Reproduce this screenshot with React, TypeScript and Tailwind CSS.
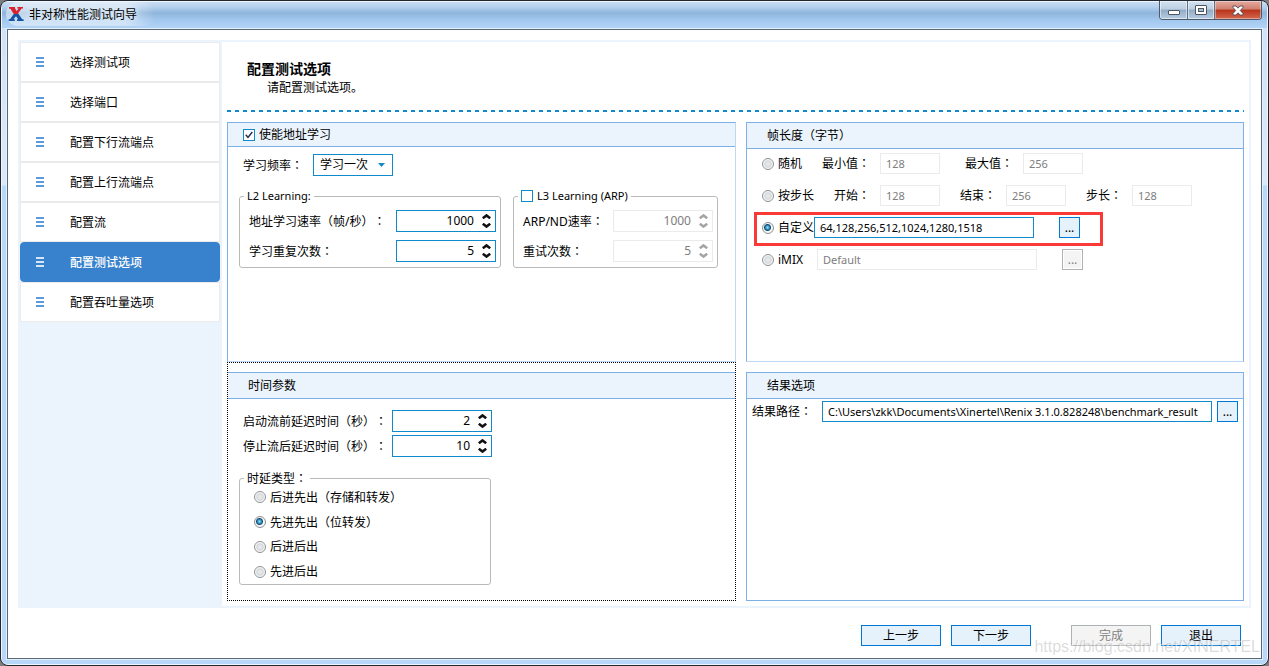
import React, { useState } from 'react';
import clsx from 'clsx';

const steps = [
  '选择测试项',
  '选择端口',
  '配置下行流端点',
  '配置上行流端点',
  '配置流',
  '配置测试选项',
  '配置吞吐量选项',
];

const latencyTypes = [
  { value: 'lifo-store', label: '后进先出（存储和转发）' },
  { value: 'fifo-bit', label: '先进先出（位转发）' },
  { value: 'lilo', label: '后进后出' },
  { value: 'filo', label: '先进后出' },
];

// Full-width punctuation is centred in its cell in the TC face
const Label: React.FC<{ text: string }> = ({ text }) => (
  <>
    {text.split(/([（）：])/).map((part, i) =>
      /^[（）：]$/.test(part) ? (
        <span key={i} className="font-['Noto_Sans_CJK_TC',sans-serif]">{part}</span>
      ) : (
        part
      )
    )}
  </>
);

const Logo: React.FC = () => (
  <svg className="w-4 h-[14px]" viewBox="0 0 16 14" aria-hidden="true">
    <path d="M1 0H7V1.6H6L8.3 4.8L10.6 1.6H9.4V0H15V1.6H13.6L9.6 7H6.4L2.4 1.6H1Z" fill="#d8232f" />
    <path d="M1 0H6.2L10.6 7H5.8L2.4 1.6H1Z" fill="#d8232f" />
    <path d="M5.8 7H10.6L14.2 12.3H15.6V14H9V12.3H10.2L8 9.3L5.5 12.3H6.8V14H0.6V12.3H2Z" fill="#1554a5" />
  </svg>
);

interface RadioProps {
  name: string;
  label: string;
  checked: boolean;
  onChange: () => void;
  className?: string;
}

const Radio: React.FC<RadioProps> = ({ name, label, checked, onChange, className }) => (
  <label className={clsx('flex items-center gap-1 h-4 whitespace-nowrap', className)}>
    <input
      type="radio"
      name={name}
      checked={checked}
      onChange={onChange}
      className="appearance-none shrink-0 w-3 h-3 rounded-full border border-[#8e9193] bg-[radial-gradient(circle,#e4e6e8_0_2px,#d3d6d9_3px,#ffffff_5px)] checked:bg-[radial-gradient(circle_at_45%_45%,#9fdcf5_0,#2b8dbd_2px,#164b70_3px,#f4f6f8_4px)]"
    />
    <span><Label text={label} /></span>
  </label>
);

interface CheckboxProps {
  label: string;
  checked: boolean;
  onChange: (checked: boolean) => void;
}

const Checkbox: React.FC<CheckboxProps> = ({ label, checked, onChange }) => (
  <label className="flex items-center gap-1">
    <span className="relative w-3 h-3">
      <input
        type="checkbox"
        checked={checked}
        onChange={(e) => onChange(e.target.checked)}
        className="block appearance-none w-3 h-3 border border-[#118acb] bg-white"
      />
      {checked && (
        <svg className="absolute inset-0 w-3 h-3 pointer-events-none" viewBox="0 0 12 12" fill="none">
          <path d="M2.8 5.8L5 8.4L9.3 3" stroke="#26304e" strokeWidth="1.5" />
        </svg>
      )}
    </span>
    <span>{label}</span>
  </label>
);

interface SpinnerProps {
  id: string;
  initial: number;
  disabled?: boolean;
}

const Spinner: React.FC<SpinnerProps> = ({ id, initial, disabled }) => {
  const [value, setValue] = useState(initial);
  return (
    <span
      className={clsx(
        'flex items-center w-[100px] h-[22px] border bg-white pr-1 shrink-0',
        disabled ? 'border-[#ebebeb] text-[#7d7d7d]' : 'border-[#118acb]'
      )}
    >
      <input
        id={id}
        value={value}
        disabled={disabled}
        onChange={(e) => setValue(Number(e.target.value) || 0)}
        className="flex-1 min-w-0 text-right pr-2 outline-none"
      />
      <span className={clsx('flex flex-col gap-1', disabled ? 'text-[#a5a5a5]' : 'text-[#111111]')}>
        <button type="button" aria-label="+" disabled={disabled} onClick={() => setValue(value + 1)}>
          <svg className="block w-[9px] h-[5px]" viewBox="0 0 9 5" fill="none" stroke="currentColor" strokeWidth="2.5">
            <path d="M0.8 4.3L4.5 1.4L8.2 4.3" />
          </svg>
        </button>
        <button type="button" aria-label="-" disabled={disabled} onClick={() => setValue(value - 1)}>
          <svg className="block w-[9px] h-[5px]" viewBox="0 0 9 5" fill="none" stroke="currentColor" strokeWidth="2.5">
            <path d="M0.8 0.7L4.5 3.6L8.2 0.7" />
          </svg>
        </button>
      </span>
    </span>
  );
};

interface FieldProps extends React.InputHTMLAttributes<HTMLInputElement> {
  className?: string;
}

const Field: React.FC<FieldProps> = ({ className, ...props }) => (
  <input
    {...props}
    className={clsx(
      'h-[21px] border px-[5px] text-[11px] outline-none bg-white',
      props.disabled ? 'border-[#ebebeb] text-[#7d7d7d]' : 'border-[#118acb]',
      className
    )}
  />
);

const MoreButton: React.FC<{ disabled?: boolean; className?: string }> = ({ disabled, className }) => (
  <button
    type="button"
    disabled={disabled}
    className={clsx(
      'w-[21px] h-[21px] border shrink-0 leading-4',
      disabled ? 'border-[#adb2b5] bg-[#f4f4f4] text-[#838383] shadow-[inset_0_0_0_1px_#ffffff]' : 'border-[#0078d7] bg-[#e5f1fb]',
      className
    )}
  >
    ...
  </button>
);

const FooterButton: React.FC<{ label: string; disabled?: boolean; className?: string }> = ({ label, disabled, className }) => (
  <button
    type="button"
    disabled={disabled}
    className={clsx(
      'w-20 h-[21px] border leading-4',
      disabled ? 'border-[#adb2b5] bg-[#f4f4f4] text-[#838383]' : 'border-[#0078d7] bg-[#e5f1fb]',
      className
    )}
  >
    {label}
  </button>
);

const TitleBar: React.FC = () => (
  <header className="flex justify-between items-start h-[26px] pl-1 pr-[5px] bg-[linear-gradient(to_bottom,#c9dcf3_0,#b4d0ee_5px,#8fb5dc_11px,#a3c8ee_18px,#b1d3f6_26px)]">
    <div className="flex items-center gap-[5px] h-6 px-0.5 rounded-full bg-[linear-gradient(to_right,#ffffff70_80%,transparent)]">
      <Logo />
      <h1 className="pt-0.5 pr-4 [text-shadow:0_0_6px_white]">非对称性能测试向导</h1>
    </div>
    <div className="flex h-[19px] -mt-px border border-t-0 border-[#4c5a6b] rounded-b-sm overflow-hidden">
      <button type="button" aria-label="最小化" className="flex items-center justify-center w-7 border-r border-[#5d6f84] bg-[linear-gradient(to_bottom,#d3e2f1_0,#bccfe2_45%,#92abc5_50%,#b6cde3_100%)] shadow-[inset_0_0_0_1px_#ffffff80]">
        <svg className="w-3 h-[11px]" viewBox="0 0 12 11">
          <rect x="0.5" y="5.5" width="11" height="4" rx="0.5" fill="#fff" stroke="#4c5560" />
        </svg>
      </button>
      <button type="button" aria-label="最大化" className="flex items-center justify-center w-[27px] border-r border-[#5d6f84] bg-[linear-gradient(to_bottom,#d3e2f1_0,#bccfe2_45%,#92abc5_50%,#b6cde3_100%)] shadow-[inset_0_0_0_1px_#ffffff80]">
        <svg className="w-3 h-[10px]" viewBox="0 0 12 10">
          <rect x="0.5" y="0.5" width="11" height="9" rx="0.5" fill="#fff" stroke="#4c5560" />
          <rect x="3.5" y="3.5" width="5" height="3" fill="#a9bfd6" stroke="#4c5560" />
        </svg>
      </button>
      <button type="button" aria-label="关闭" className="flex items-center justify-center w-[46px] bg-[linear-gradient(to_bottom,#e4aaa0_0,#d0806f_45%,#b8331b_50%,#d4694e_100%)] shadow-[inset_0_0_0_1px_#ffffff60]">
        <svg className="w-3 h-[11px]" viewBox="0 0 12 11">
          <path d="M1 1H4L6 3.2L8 1H11V2.5L8.3 5.5L11 8.5V10H8L6 7.8L4 10H1V8.5L3.7 5.5L1 2.5Z" fill="#fff" stroke="#4f4a55" strokeWidth="0.9" />
        </svg>
      </button>
    </div>
  </header>
);

const Sidebar: React.FC<{ active: number; onSelect: (index: number) => void }> = ({ active, onSelect }) => (
  <nav className="w-[200px] mr-0.5 shrink-0">
    {steps.map((step, index) => (
      <button
        key={step}
        type="button"
        onClick={() => onSelect(index)}
        className={clsx(
          'flex items-center w-full h-10 pl-[15px] gap-[26px] border text-left',
          active === index
            ? 'bg-[#3882cd] border-[#3882cd] text-white font-medium rounded-sm'
            : 'bg-white border-[#ebebeb]'
        )}
      >
        <svg className={clsx('w-2 h-[10px]', active === index ? 'text-[#d5e6f6]' : 'text-[#5b9bdb]')} viewBox="0 0 8 10" fill="currentColor">
          <path d="M0 0H8V2H0ZM0 4H8V6H0ZM0 8H8V10H0Z" />
        </svg>
        <span className="pt-0.5">{step}</span>
      </button>
    ))}
  </nav>
);

const PanelHeader: React.FC<{ children: React.ReactNode; className?: string }> = ({ children, className }) => (
  <div className={clsx('flex items-center bg-[#ebf4fc] border-b border-[#7db0e6]', className)}>{children}</div>
);

const App: React.FC = () => {
  const [active, setActive] = useState(5);
  const [learning, setLearning] = useState(true);
  const [arp, setArp] = useState(false);
  const [frameMode, setFrameMode] = useState('custom');
  const [latency, setLatency] = useState('fifo-bit');

  return (
    <div className="min-h-screen flex bg-[#7d7d80] text-xs leading-4 text-black font-['Noto_Sans','Noto_Sans_CJK_SC',sans-serif] [text-spacing-trim:space-all]">
      <div className="relative flex-1 flex flex-col border border-[#22262f] rounded-lg overflow-hidden">
        <div className="flex-1 flex flex-col border border-[#eef6fe] rounded-md bg-[linear-gradient(to_bottom,#cfe1f7_0,#dbeafa_183px,#b7d8f9_184px)]">
          <TitleBar />
          <div className="flex-1 flex flex-col mx-1 mb-1 border border-[#e3f0fd]">
            <div className="flex-1 flex flex-col border border-[#5a6878] bg-white px-[10px] pt-[10px] pb-3">
              <div className="flex-1 flex border-2 border-[#ebf4fc] bg-[#ebf4fc]">
                <Sidebar active={active} onSelect={setActive} />

                <main className="flex-1 min-w-0 flex flex-col bg-white px-[5px] pb-[5px]">
                  <div className="pt-[17px] pl-5 pb-[14px]">
                    <h2 className="text-sm leading-5 font-bold">配置测试选项</h2>
                    <p className="pt-px pl-5">请配置测试选项。</p>
                  </div>
                  <div className="h-0.5 mb-[10px] bg-[repeating-linear-gradient(to_right,#118acb_0_4px,transparent_4px_8px)]" />

                  <div className="flex-1 grid grid-cols-[509fr_498fr] gap-[10px]">
                    <div className="flex flex-col">
                      {/* Address learning */}
                      <section className="h-60 border border-[#7db0e6] border-r-[#bdd8f3] border-b-[#bdd8f3]">
                        <PanelHeader className="h-6 pl-[15px]">
                          <Checkbox label="使能地址学习" checked={learning} onChange={setLearning} />
                        </PanelHeader>
                        <div className="pt-[7px] px-[11px]">
                          <div className="flex items-center pl-1 mb-3">
                            <label htmlFor="frequency" className="w-[70px]"><Label text="学习频率：" /></label>
                            <span className="relative">
                              <select id="frequency" className="block appearance-none w-20 h-[22px] border border-[#118acb] pl-1.5 bg-white">
                                <option>学习一次</option>
                              </select>
                              <svg className="absolute right-2 top-[9px] w-[7px] h-1 pointer-events-none" viewBox="0 0 7 4">
                                <path d="M0 0H7L3.5 4Z" fill="#118acb" />
                              </svg>
                            </span>
                          </div>
                          <div className="flex gap-3">
                            <fieldset className="w-[262px] border border-[#bababa] rounded-[3px] pl-[9px] pr-1 pb-[5px]">
                              <legend className="-ml-[5px] px-[3px] text-[11px]">L2 Learning:</legend>
                              <div className="flex flex-col gap-2 pt-1.5">
                                <div className="flex items-center justify-between">
                                  <label htmlFor="rate"><Label text="地址学习速率（帧/秒）：" /></label>
                                  <Spinner id="rate" initial={1000} />
                                </div>
                                <div className="flex items-center justify-between">
                                  <label htmlFor="repeat"><Label text="学习重复次数：" /></label>
                                  <Spinner id="repeat" initial={5} />
                                </div>
                              </div>
                            </fieldset>
                            <fieldset className="w-[205px] border border-[#bababa] rounded-[3px] pl-[9px] pr-1 pb-[5px]">
                              <legend className="-ml-[5px] px-[3px] text-[11px]">
                                <Checkbox label="L3 Learning (ARP)" checked={arp} onChange={setArp} />
                              </legend>
                              <div className="flex flex-col gap-2 pt-1.5">
                                <div className="flex items-center justify-between">
                                  <label htmlFor="arp-rate"><Label text="ARP/ND速率：" /></label>
                                  <Spinner id="arp-rate" initial={1000} disabled={!arp} />
                                </div>
                                <div className="flex items-center justify-between">
                                  <label htmlFor="retry"><Label text="重试次数：" /></label>
                                  <Spinner id="retry" initial={5} disabled={!arp} />
                                </div>
                              </div>
                            </fieldset>
                          </div>
                        </div>
                      </section>

                      {/* Time parameters, drawn with the focus rectangle */}
                      <section className="flex-1 border border-dotted border-black pt-[9px]">
                        <PanelHeader className="h-[27px] pl-5 border-t">时间参数</PanelHeader>
                        <div className="pt-[11px] pl-[11px]">
                          <div className="flex flex-col gap-[3px] pl-1 mb-[13px]">
                            <div className="flex items-center">
                              <label htmlFor="start-delay" className="w-[149px]"><Label text="启动流前延迟时间（秒）：" /></label>
                              <Spinner id="start-delay" initial={2} />
                            </div>
                            <div className="flex items-center">
                              <label htmlFor="stop-delay" className="w-[149px]"><Label text="停止流后延迟时间（秒）：" /></label>
                              <Spinner id="stop-delay" initial={10} />
                            </div>
                          </div>
                          <fieldset className="w-[252px] border border-[#bababa] rounded-[3px] pl-[9px] pb-1">
                            <legend className="-ml-[5px] px-[3px] h-4"><Label text="时延类型：" /></legend>
                            <div className="flex flex-col gap-[9px] pt-[3px] pl-[5px]">
                              {latencyTypes.map((type) => (
                                <Radio
                                  key={type.value}
                                  name="latency"
                                  label={type.label}
                                  checked={latency === type.value}
                                  onChange={() => setLatency(type.value)}
                                />
                              ))}
                            </div>
                          </fieldset>
                        </div>
                      </section>
                    </div>

                    <div className="flex flex-col gap-[10px]">
                      {/* Frame length */}
                      <section className="h-60 border border-[#7db0e6] border-b-[#bdd8f3]">
                        <PanelHeader className="h-[26px] pl-5"><span><Label text="帧长度（字节）" /></span></PanelHeader>
                        <div className="flex flex-col items-start gap-[11px] pt-1 pl-[15px]">
                          <div className="flex items-center">
                            <Radio name="frame" label="随机" checked={frameMode === 'random'} onChange={() => setFrameMode('random')} className="w-[60px]" />
                            <label htmlFor="min" className="w-[58px]"><Label text="最小值：" /></label>
                            <Field id="min" defaultValue="128" disabled={frameMode !== 'random'} className="w-[60px]" />
                            <label htmlFor="max" className="w-[58px] ml-[25px]"><Label text="最大值：" /></label>
                            <Field id="max" defaultValue="256" disabled={frameMode !== 'random'} className="w-[60px]" />
                          </div>
                          <div className="flex items-center">
                            <Radio name="frame" label="按步长" checked={frameMode === 'step'} onChange={() => setFrameMode('step')} className="w-[72px]" />
                            <label htmlFor="begin" className="w-[46px]"><Label text="开始：" /></label>
                            <Field id="begin" defaultValue="128" disabled={frameMode !== 'step'} className="w-[60px]" />
                            <label htmlFor="end" className="w-[46px] ml-5"><Label text="结束：" /></label>
                            <Field id="end" defaultValue="256" disabled={frameMode !== 'step'} className="w-[60px]" />
                            <label htmlFor="step" className="w-[46px] ml-5"><Label text="步长：" /></label>
                            <Field id="step" defaultValue="128" disabled={frameMode !== 'step'} className="w-[60px]" />
                          </div>
                          <div className="relative flex items-center">
                            <Radio name="frame" label="自定义" checked={frameMode === 'custom'} onChange={() => setFrameMode('custom')} className="w-[52px]" />
                            <Field aria-label="自定义" defaultValue="64,128,256,512,1024,1280,1518" disabled={frameMode !== 'custom'} className="w-[220px]" />
                            <MoreButton disabled={frameMode !== 'custom'} className="ml-[25px]" />
                            <div className="absolute -left-2 -right-[23px] -top-[5px] -bottom-2 border-3 border-[#f93a37] pointer-events-none" />
                          </div>
                          <div className="flex items-center">
                            <Radio name="frame" label="iMIX" checked={frameMode === 'imix'} onChange={() => setFrameMode('imix')} className="w-[55px]" />
                            <Field aria-label="iMIX" defaultValue="Default" disabled={frameMode !== 'imix'} className="w-[220px]" />
                            <MoreButton disabled={frameMode !== 'imix'} className="ml-[25px]" />
                          </div>
                        </div>
                      </section>

                      {/* Result options */}
                      <section className="flex-1 border border-[#7db0e6]">
                        <PanelHeader className="h-[26px] pl-5">结果选项</PanelHeader>
                        <div className="flex items-center gap-[5px] pt-0.5 px-[5px]">
                          <label htmlFor="path" className="w-[65px]"><Label text="结果路径：" /></label>
                          <Field id="path" defaultValue="C:\Users\zkk\Documents\Xinertel\Renix 3.1.0.828248\benchmark_result" className="flex-1 min-w-0" />
                          <MoreButton />
                        </div>
                      </section>
                    </div>
                  </div>
                </main>
              </div>

              <footer className="flex justify-end gap-[10px] pt-[17px] pr-[10px]">
                <FooterButton label="上一步" />
                <FooterButton label="下一步" />
                <FooterButton label="完成" disabled className="ml-[30px]" />
                <FooterButton label="退出" />
              </footer>
            </div>
          </div>
        </div>
        <span className="absolute right-2 bottom-2 text-base leading-5 font-['Liberation_Sans',sans-serif] text-[#a0a0a060] pointer-events-none [text-shadow:1px_1px_0_#ffffff80]">
          https://blog.csdn.net/XINERTEL
        </span>
      </div>
    </div>
  );
};

export default App;
